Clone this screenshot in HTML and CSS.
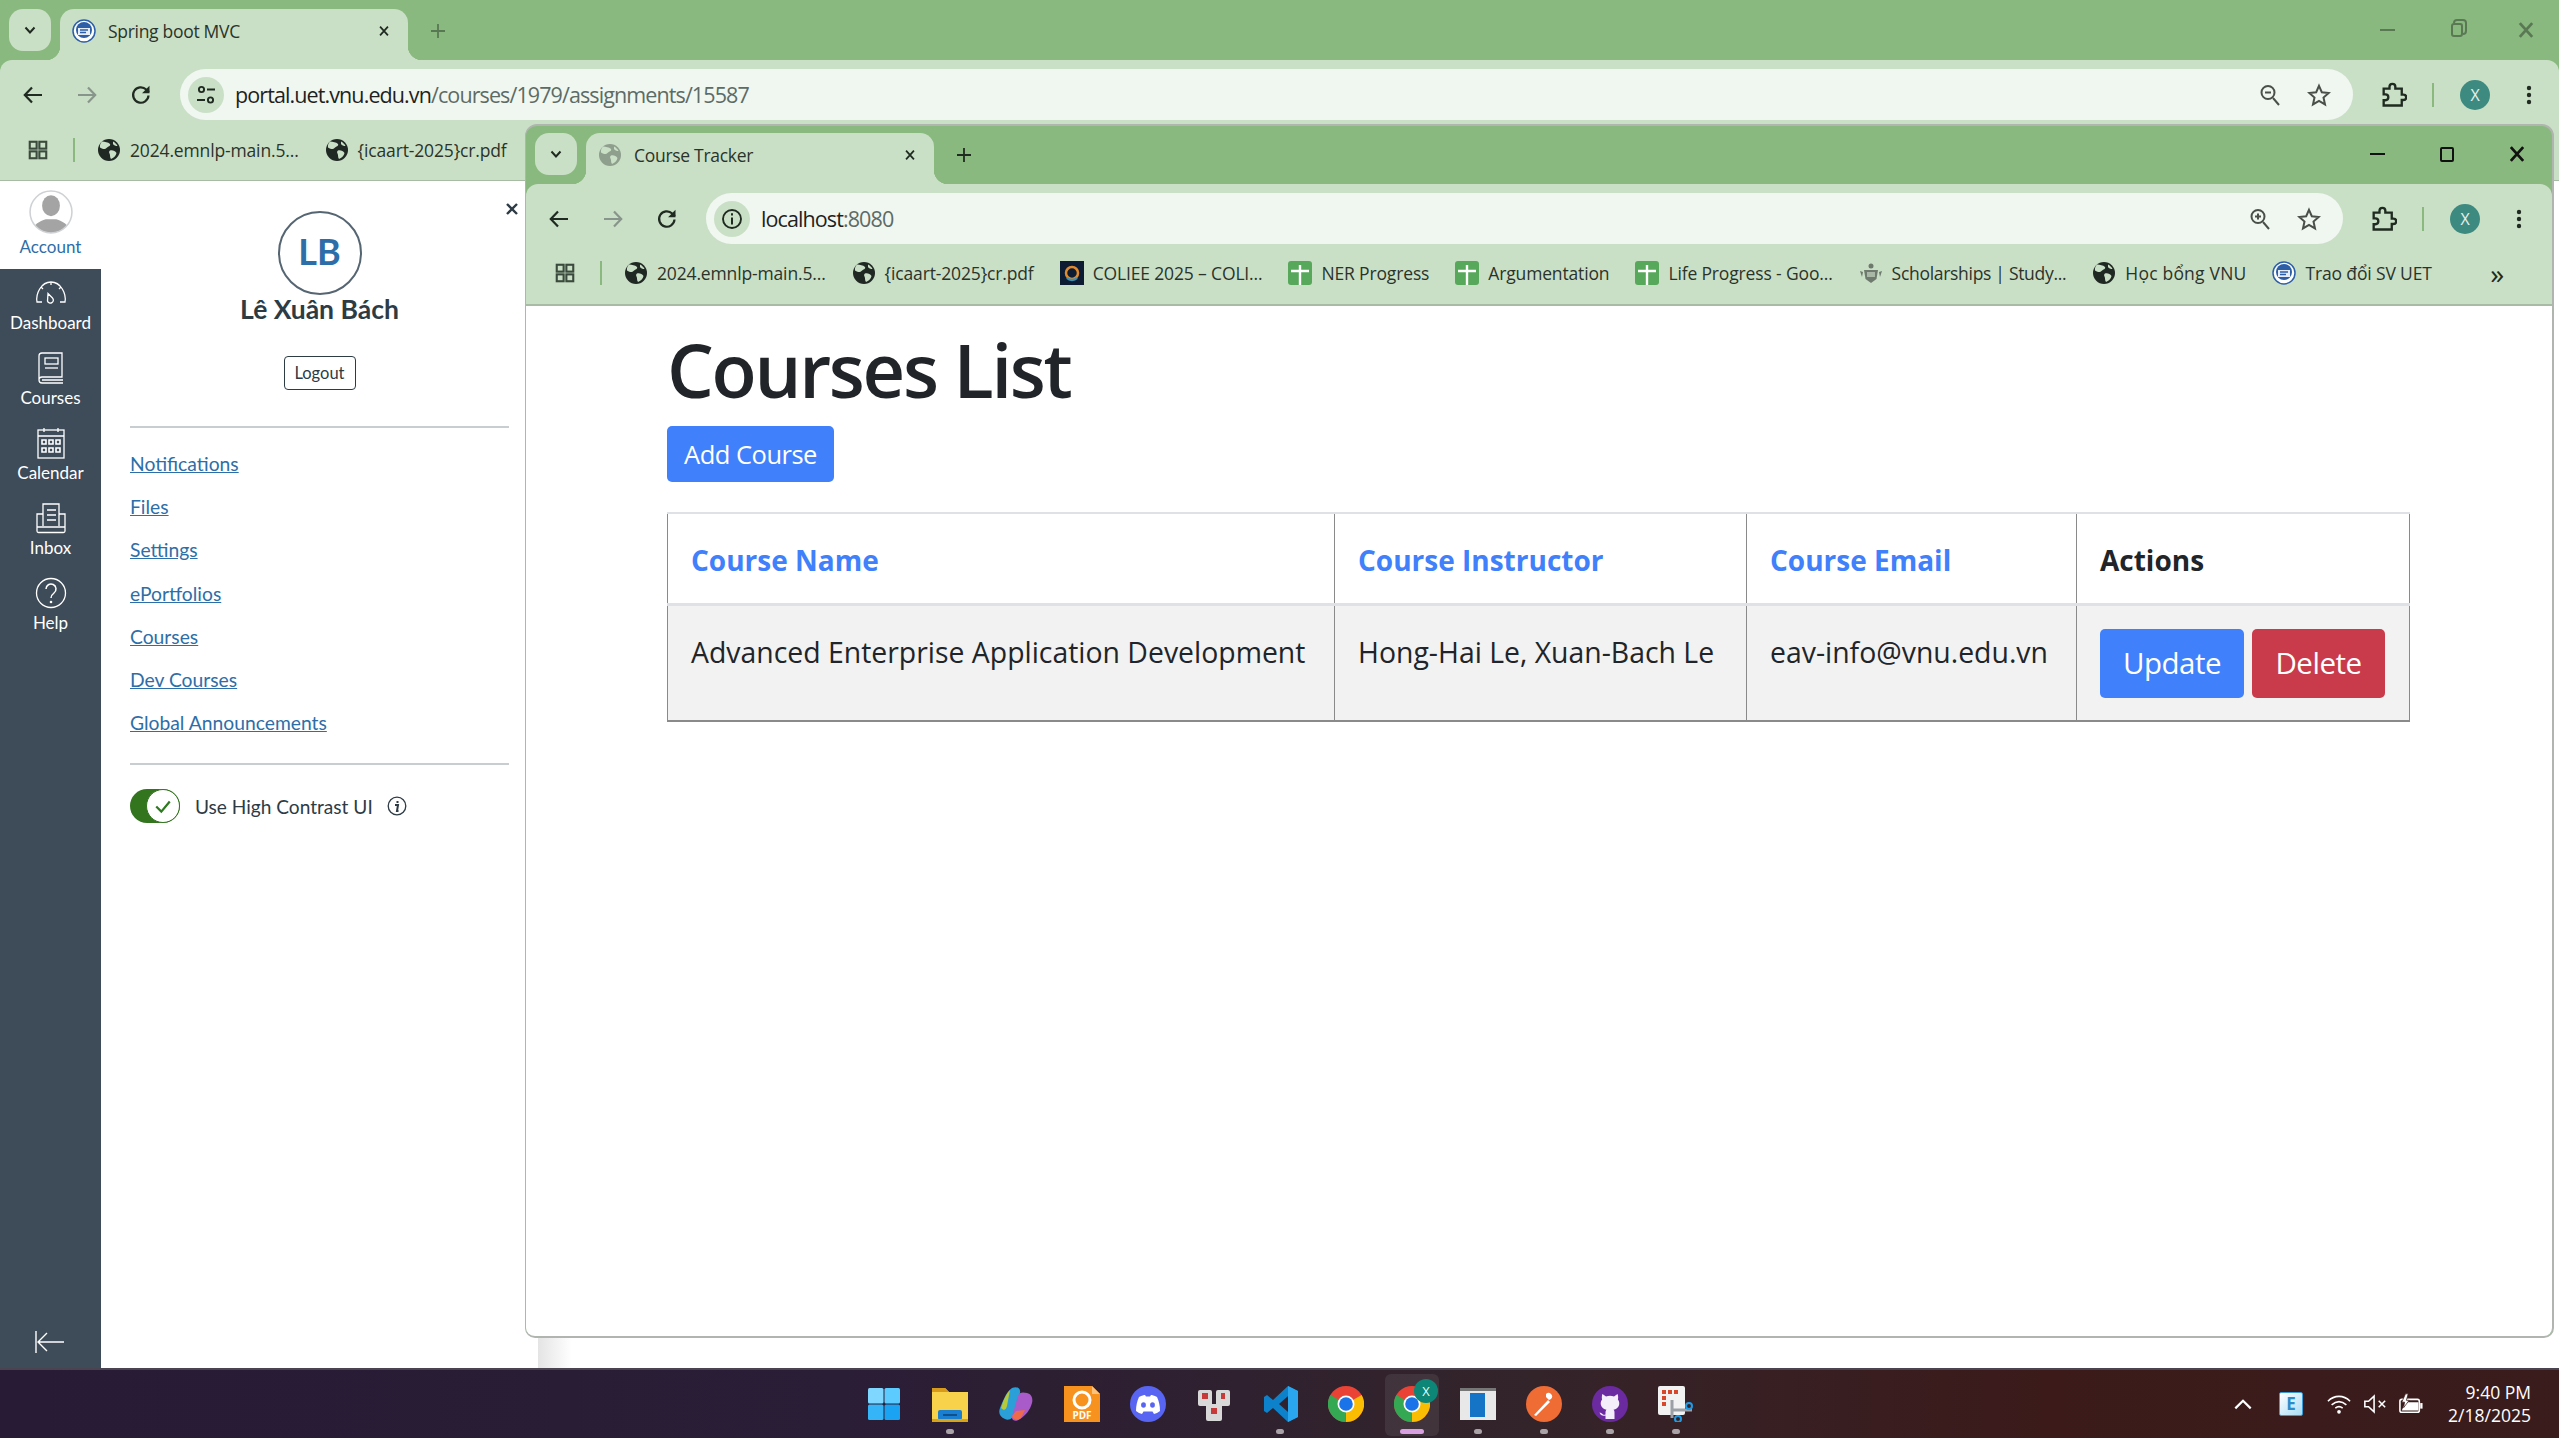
FILE: index.html
```html
<!DOCTYPE html>
<html lang="en">
<head>
<meta charset="utf-8">
<title>Course Tracker</title>
<link rel="stylesheet" href="styles.css">
</head>
<body>
<svg class="defs" width="0" height="0" aria-hidden="true">
  <symbol id="i-chev" viewBox="0 0 16 16"><path d="M3.5 5.5 8 10.5l4.5-5" fill="none" stroke="currentColor" stroke-width="2"/></symbol>
  <symbol id="i-x" viewBox="0 0 16 16"><path d="M3.5 3 12.5 13M12.5 3 3.5 13" fill="none" stroke="currentColor" stroke-width="2"/></symbol>
  <symbol id="i-plus" viewBox="0 0 16 16"><path d="M8 1v14M1 8h14" fill="none" stroke="currentColor" stroke-width="1.8"/></symbol>
  <symbol id="i-back" viewBox="0 0 24 24"><path d="M21 12H4M11 4.5 3.8 12l7.2 7.5" fill="none" stroke="currentColor" stroke-width="2.2"/></symbol>
  <symbol id="i-fwd" viewBox="0 0 24 24"><path d="M3 12h17M13 4.5l7.2 7.5-7.2 7.5" fill="none" stroke="currentColor" stroke-width="2.2"/></symbol>
  <symbol id="i-reload" viewBox="0 0 24 24"><path d="M19.5 12.5a7.7 7.7 0 1 1-2.3-6L20 9" fill="none" stroke="currentColor" stroke-width="2.2"/><path d="M20.5 2.8v7.4h-7.4z" fill="currentColor"/></symbol>
  <symbol id="i-tune" viewBox="0 0 24 24"><g fill="none" stroke="currentColor" stroke-width="1.9"><circle cx="7.5" cy="6.5" r="2.6"/><path d="M13 6.5h8M3 17h8"/><circle cx="16.5" cy="17" r="2.6"/></g></symbol>
  <symbol id="i-info" viewBox="0 0 24 24"><circle cx="12" cy="12" r="9" fill="none" stroke="currentColor" stroke-width="1.9"/><path d="M12 10.5v7M12 6.3v2.2" stroke="currentColor" stroke-width="2"/></symbol>
  <symbol id="i-zoomout" viewBox="0 0 24 24"><g fill="none" stroke="#4a4f4a" stroke-width="2"><circle cx="10" cy="9.5" r="6.5"/><path d="m15 15 6 7M7 9.5h6"/></g></symbol>
  <symbol id="i-zoomin" viewBox="0 0 24 24"><g fill="none" stroke="#4a4f4a" stroke-width="2"><circle cx="10" cy="9.5" r="6.5"/><path d="m15 15 6 7M7 9.5h6M10 6.5v6"/></g></symbol>
  <symbol id="i-star" viewBox="0 0 24 24"><path d="m12 2.8 2.8 6.4 6.9.7-5.2 4.6 1.5 6.9-6-3.6-6 3.6 1.5-6.9-5.2-4.6 6.9-.7z" fill="none" stroke="#4a4f4a" stroke-width="2"/></symbol>
  <symbol id="i-ext" viewBox="0 0 24 24"><path d="M4 6.5h5V5a2.5 2.5 0 0 1 5 0v1.500h5.500v5.200h1.500a2.300 2.300 0 0 1 0 4.600h-1.500V21H4v-4.500h1.500a2.500 2.500 0 0 0 0-5H4z" fill="none" stroke="#1f2a20" stroke-width="2"/></symbol>
  <symbol id="i-menu" viewBox="0 0 24 24"><circle cx="12" cy="5" r="2.200" fill="currentColor"/><circle cx="12" cy="12" r="2.200" fill="currentColor"/><circle cx="12" cy="19" r="2.200" fill="currentColor"/></symbol>
  <symbol id="i-apps" viewBox="0 0 24 24"><g fill="none" stroke="currentColor" stroke-width="2.300"><rect x="3" y="3" width="7.500" height="7.500"/><rect x="13.500" y="3" width="7.500" height="7.500"/><rect x="3" y="13.500" width="7.500" height="7.500"/><rect x="13.500" y="13.500" width="7.500" height="7.500"/></g></symbol>
  <symbol id="i-globe" viewBox="0 0 24 24"><circle cx="12" cy="12" r="11" fill="#202824"/><path d="M5 3.500c3 .5 6 .5 8 2.500 1 2-2 2.500-3.500 4C8 12 6 11 3 9.500 2.500 7 3.500 5 5 3.500zM13 12.500c3-.5 5 .5 6.500 2.500-.5 3-3 5-5.500 6-1.500-2-.5-4-1.500-5.500-.8-1.300-.3-2.300.5-3zM16 3.500c2 1 3.500 2.500 4.500 4.500-2 0-3.500-.5-4.500-2z" fill="#cae0c6"/></symbol>
  <symbol id="i-plusdoc" viewBox="0 0 24 24"><rect width="24" height="24" rx="3" fill="#57a85a"/><path d="M12 4v20M3 10h18" stroke="#fff" stroke-width="2.400"/></symbol>
  <symbol id="i-uet" viewBox="0 0 24 24"><circle cx="12" cy="12" r="11" fill="#fff" stroke="#2d5fa8" stroke-width="1.500"/><circle cx="12" cy="11" r="8" fill="#2d5fa8"/><rect x="6" y="9" width="12" height="7" fill="#e7eef8"/><path d="M8 11h8M8 13.500h6" stroke="#2d5fa8" stroke-width="1.400"/></symbol>
  <symbol id="i-crest" viewBox="0 0 24 24"><g fill="#6d7a6d"><circle cx="12" cy="5" r="2.500"/><path d="M5 9h14l-1.500 9-5.500 4-5.500-4z"/><path d="M1 10l3 1-1 5zM23 10l-3 1 1 5z"/></g><path d="M8 11h8v5H8z" fill="#a9b8a6"/></symbol>
</svg>

<section class="win win-outer">
  <div class="tabstrip">
    <button class="tabdrop"><svg class="ic16"><use href="#i-chev"/></svg></button>
    <div class="tab">
      <svg class="fav"><use href="#i-uet"/></svg>
      <span class="tab-title">Spring boot MVC</span>
      <svg class="ic14 tab-x"><use href="#i-x"/></svg>
    </div>
    <svg class="ic16 newtab dim"><use href="#i-plus"/></svg>
    <div class="controls dim">
      <span class="ctl"><span class="min"></span></span>
      <span class="ctl"><span class="restore"></span></span>
      <span class="ctl"><svg class="ic20"><use href="#i-x"/></svg></span>
    </div>
  </div>
  <div class="toolbar">
    <span class="tbtn"><svg class="ic24"><use href="#i-back"/></svg></span>
    <span class="tbtn off"><svg class="ic24"><use href="#i-fwd"/></svg></span>
    <span class="tbtn"><svg class="ic24"><use href="#i-reload"/></svg></span>
    <div class="omni">
      <span class="chip"><svg class="ic24"><use href="#i-tune"/></svg></span>
      <span class="url">portal.uet.vnu.edu.vn<span class="url-path">/courses/1979/assignments/15587</span></span>
      <span class="omni-end"><svg class="ic24"><use href="#i-zoomout"/></svg><svg class="ic24"><use href="#i-star"/></svg></span>
    </div>
    <div class="tools">
      <svg class="tool-ext"><use href="#i-ext"/></svg>
      <span class="tool-sep"></span>
      <span class="avatar">X</span>
      <svg class="ic24 tool-menu"><use href="#i-menu"/></svg>
    </div>
  </div>
  <div class="bookmarks">
    <svg class="ic24 apps"><use href="#i-apps"/></svg>
    <span class="bm-sep"></span>
    <span class="bm bm-a"><svg class="fav"><use href="#i-globe"/></svg><span>2024.emnlp-main.5...</span></span>
    <span class="bm"><svg class="fav"><use href="#i-globe"/></svg><span>{icaart-2025}cr.pdf</span></span>
  </div>
</section>

<main class="canvas">
  <nav class="rail">
    <a class="rail-account">
      <svg class="rail-avatar" viewBox="0 0 42 42"><defs><clipPath id="avc"><circle cx="21" cy="21" r="20"/></clipPath></defs><circle cx="21" cy="21" r="20" fill="#fff"/><g clip-path="url(#avc)" fill="#a4a4a4"><ellipse cx="21" cy="15" rx="8.500" ry="10"/><path d="M3 42c0-9 7-12 13-14h10c6 2 13 5 13 14z"/></g><circle cx="21" cy="21" r="20" fill="none" stroke="#cfd2d4" stroke-width="1.500"/></svg>
      <span>Account</span>
    </a>
    <a class="rail-item">
      <svg class="rail-ic" viewBox="0 0 32 26"><g fill="none" stroke="#fff" stroke-width="1.300"><path d="M7 22H2C.5 14 6 2 16 2s15.500 12 14 20h-5"/><path d="M13 13.500 17.500 18a3 3 0 1 1-5 3z"/><path d="M16 2v3M6 7l2 2M26 7l-2 2"/></g></svg>
      <span>Dashboard</span>
    </a>
    <a class="rail-item">
      <svg class="rail-ic" viewBox="0 0 32 32"><g fill="none" stroke="#fff" stroke-width="1.300"><path d="M7 1h20v24H7a3 3 0 0 0-3 3V4a3 3 0 0 1 3-3z"/><path d="M4 28a3 3 0 0 0 3 3h21M7 28h21"/><rect x="10" y="6" width="13" height="6"/><path d="M10 16h13"/></g></svg>
      <span>Courses</span>
    </a>
    <a class="rail-item">
      <svg class="rail-ic" viewBox="0 0 32 32"><g fill="none" stroke="#fff" stroke-width="1.300"><rect x="3" y="3" width="26" height="28"/><path d="M3 9h26M9 1v4M23 1v4"/><path d="M7 13h4v4H7zM14 13h4v4h-4zM21 13h4v4h-4zM7 21h4v4H7zM14 21h4v4h-4zM21 21h4v4h-4z" stroke-width="1.600"/></g></svg>
      <span>Calendar</span>
    </a>
    <a class="rail-item">
      <svg class="rail-ic" viewBox="0 0 32 32"><g fill="none" stroke="#fff" stroke-width="1.300"><path d="M8 24V2h16v22"/><path d="M12 8h9M12 13h9M12 18h9"/><path d="M8 12H2v17a1.500 1.500 0 0 0 1.500 1.500h25A1.500 1.500 0 0 0 30 29V12h-6M2 25h28"/></g></svg>
      <span>Inbox</span>
    </a>
    <a class="rail-item">
      <svg class="rail-ic" viewBox="0 0 32 32"><circle cx="16" cy="16" r="14.500" fill="none" stroke="#fff" stroke-width="1.300"/><path d="M11 12a5 5 0 1 1 8 4c-2 1.500-3 2.500-3 5" fill="none" stroke="#fff" stroke-width="1.500"/><circle cx="16" cy="25" r="1.300" fill="#fff"/></svg>
      <span>Help</span>
    </a>
    <svg class="rail-collapse" viewBox="0 0 32 24"><path d="M2 1v22M30 12H5M13 3l-9 9 9 9" fill="none" stroke="#fff" stroke-width="1.400"/></svg>
  </nav>

  <aside class="tray-panel">
    <svg class="panel-x" viewBox="0 0 14 14"><path d="M2 2l10 10M12 2 2 12" stroke="#2d3b45" stroke-width="2.400"/></svg>
    <div class="profile">
      <div class="initials">LB</div>
      <div class="name">Lê Xuân Bách</div>
      <button class="logout">Logout</button>
    </div>
    <ul class="links">
      <li><a href="#">Notifications</a></li>
      <li><a href="#">Files</a></li>
      <li><a href="#">Settings</a></li>
      <li><a href="#">ePortfolios</a></li>
      <li><a href="#">Courses</a></li>
      <li><a href="#">Dev Courses</a></li>
      <li><a href="#">Global Announcements</a></li>
    </ul>
    <div class="contrast">
      <span class="switch"><span class="knob"><svg viewBox="0 0 16 16"><path d="M2 8.500 6.500 13 14 4" fill="none" stroke="#2d7a1f" stroke-width="2"/></svg></span></span>
      <span class="contrast-label">Use High Contrast UI</span>
      <svg class="contrast-info" viewBox="0 0 20 20"><circle cx="10" cy="10" r="8.800" fill="none" stroke="#2d3b45" stroke-width="1.300"/><path d="M8 9h3l-1 6h1.500M10.500 5v2" fill="none" stroke="#2d3b45" stroke-width="2"/></svg>
    </div>
  </aside>
  <div class="panel-shadow"></div>

  <section class="win win-inner">
    <div class="tabstrip">
      <button class="tabdrop"><svg class="ic16"><use href="#i-chev"/></svg></button>
      <div class="tab">
        <svg class="fav fav-grey"><use href="#i-globe"/></svg>
        <span class="tab-title">Course Tracker</span>
        <svg class="ic14 tab-x"><use href="#i-x"/></svg>
      </div>
      <svg class="ic16 newtab"><use href="#i-plus"/></svg>
      <div class="controls">
        <span class="ctl"><span class="min"></span></span>
        <span class="ctl"><span class="max"></span></span>
        <span class="ctl"><svg class="ic20"><use href="#i-x"/></svg></span>
      </div>
    </div>
    <div class="toolbar">
      <span class="tbtn"><svg class="ic24"><use href="#i-back"/></svg></span>
      <span class="tbtn off"><svg class="ic24"><use href="#i-fwd"/></svg></span>
      <span class="tbtn"><svg class="ic24"><use href="#i-reload"/></svg></span>
      <div class="omni">
        <span class="chip"><svg class="ic24"><use href="#i-info"/></svg></span>
        <span class="url">localhost<span class="url-path">:8080</span></span>
        <span class="omni-end"><svg class="ic24"><use href="#i-zoomin"/></svg><svg class="ic24"><use href="#i-star"/></svg></span>
      </div>
      <div class="tools">
        <svg class="tool-ext"><use href="#i-ext"/></svg>
        <span class="tool-sep"></span>
        <span class="avatar">X</span>
        <svg class="ic24 tool-menu"><use href="#i-menu"/></svg>
      </div>
    </div>
    <div class="bookmarks">
      <svg class="ic24 apps"><use href="#i-apps"/></svg>
      <span class="bm-sep"></span>
      <span class="bm bm-a"><svg class="fav"><use href="#i-globe"/></svg><span>2024.emnlp-main.5...</span></span>
      <span class="bm"><svg class="fav"><use href="#i-globe"/></svg><span>{icaart-2025}cr.pdf</span></span>
      <span class="bm"><svg class="fav" viewBox="0 0 24 24"><rect width="24" height="24" fill="#0d1b33"/><circle cx="12" cy="12" r="6" fill="none" stroke="#e08a2e" stroke-width="2.500"/><path d="M7 17a7 7 0 0 0 10 0" fill="none" stroke="#3d8fb5" stroke-width="2.500"/></svg><span>COLIEE 2025 – COLI...</span></span>
      <span class="bm"><svg class="fav"><use href="#i-plusdoc"/></svg><span>NER Progress</span></span>
      <span class="bm"><svg class="fav"><use href="#i-plusdoc"/></svg><span>Argumentation</span></span>
      <span class="bm"><svg class="fav"><use href="#i-plusdoc"/></svg><span>Life Progress - Goo...</span></span>
      <span class="bm"><svg class="fav"><use href="#i-crest"/></svg><span class="bm-tight">Scholarships | Study...</span></span>
      <span class="bm"><svg class="fav"><use href="#i-globe"/></svg><span class="bm-wide">Học bổng VNU</span></span>
      <span class="bm"><svg class="fav"><use href="#i-uet"/></svg><span>Trao đổi SV UET</span></span>
      <span class="bm-more">»</span>
    </div>
    <div class="page">
      <h1 class="page-title">Courses List</h1>
      <a class="btn btn-blue btn-add">Add Course</a>
      <table class="courses">
        <colgroup><col class="c1"><col class="c2"><col class="c3"><col class="c4"></colgroup>
        <thead>
          <tr>
            <th><a>Course Name</a></th>
            <th><a>Course Instructor</a></th>
            <th><a>Course Email</a></th>
            <th>Actions</th>
          </tr>
        </thead>
        <tbody>
          <tr>
            <td>Advanced Enterprise Application Development</td>
            <td>Hong-Hai Le, Xuan-Bach Le</td>
            <td>eav-info@vnu.edu.vn</td>
            <td class="actions"><a class="btn btn-blue btn-row">Update</a><a class="btn btn-red btn-row">Delete</a></td>
          </tr>
        </tbody>
      </table>
    </div>
  </section>
</main>

<footer class="taskbar">
  <div></div>
  <div class="dock">
    <span class="app"><svg viewBox="0 0 36 36"><g fill="#4cc2ff"><rect x="2" y="2" width="15.500" height="15.500" rx="1.500" fill="#7fd6ff"/><rect x="18.500" y="2" width="15.500" height="15.500" rx="1.500" fill="#5ccbff"/><rect x="2" y="18.500" width="15.500" height="15.500" rx="1.500" fill="#35b5f8"/><rect x="18.500" y="18.500" width="15.500" height="15.500" rx="1.500" fill="#1aa3f2"/></g></svg></span>
    <span class="app run"><svg viewBox="0 0 36 36"><path d="M0 2h13l4 4h19v30H0z" fill="#f8d24a"/><path d="M0 2h13l4 4H0z" fill="#d89a1b"/><rect x="6" y="24" width="24" height="10" rx="2" fill="#1a7fd0"/><rect x="11" y="28" width="14" height="2" fill="#0f4f8a"/><rect y="33" width="36" height="3" fill="#d9a318"/></svg></span>
    <span class="app"><svg viewBox="0 0 36 36"><path d="M14 2c5-2 9 0 8 5l-5 20c-1 5-6 8-10 6-5-2-7-6-5-11 3-7 6-16 12-20z" fill="#2b9fd8"/><path d="M3 22c2-7 5-14 9-18l-3 16c-1 4-3 5-6 2z" fill="#b8c93a"/><path d="M22 33c-4 3-9 2-8-3l6-20c1-4 5-4 9-3 5 1 6 6 5 10-2 7-6 12-12 16z" fill="#a85bc9"/><path d="M14 30c1 4 6 5 9 2l4-8-9 1z" fill="#ef6a4b"/></svg></span>
    <span class="app"><svg viewBox="0 0 36 36"><path d="M0 0h28l8 8v28H0z" fill="#f7921e"/><path d="M28 0v8h8z" fill="#fbc27e"/><circle cx="18" cy="14" r="8" fill="none" stroke="#fff" stroke-width="3"/><text x="18" y="33" text-anchor="middle" class="pdf-text">PDF</text></svg></span>
    <span class="app"><svg viewBox="0 0 36 36"><circle cx="18" cy="18" r="18" fill="#5865f2"/><path d="M9 11c3-1.500 5-2 6-2l1 1.500h4L21 9c1 0 3 .5 6 2 2 4 3 9 3 14-2 1.500-4 2.500-6 3l-1.500-2.500H13.500L12 28c-2-.5-4-1.500-6-3 0-5 1-10 3-14z" fill="#fff"/><ellipse cx="13.500" cy="19" rx="2.400" ry="2.800" fill="#5865f2"/><ellipse cx="22.500" cy="19" rx="2.400" ry="2.800" fill="#5865f2"/></svg></span>
    <span class="app"><svg viewBox="0 0 36 36"><g fill="#d8d8d8"><rect x="2" y="4" width="14" height="16" rx="2"/><rect x="20" y="4" width="14" height="16" rx="2"/><rect x="10" y="18" width="16" height="17" rx="2"/></g><g fill="#c83a3a"><rect x="6" y="7" width="6" height="6"/><rect x="25" y="7" width="4" height="6"/><rect x="15" y="22" width="6" height="6"/></g></svg></span>
    <span class="app run"><svg viewBox="0 0 36 36"><path d="M26 0 36 5v26l-10 5-15-14-6 5-3-2V11l3-2 6 5zm0 10-9 8 9 8z" fill="#0d82cb"/><path d="M26 0 36 5v26l-10 5z" fill="#2aa6ef"/></svg></span>
    <span class="app"><svg viewBox="0 0 36 36"><use href="#chrome-mark"/></svg></span>
    <span class="app active"><span class="active-bg"></span><svg viewBox="0 0 36 36"><use href="#chrome-mark"/></svg><span class="badge">X</span></span>
    <span class="app run"><svg viewBox="0 0 36 36"><rect width="36" height="32" y="2" fill="#e8e8e8"/><rect width="36" height="3" y="2" fill="#777"/><rect x="10" y="7" width="15" height="24" fill="#1674c7"/></svg></span>
    <span class="app run"><svg viewBox="0 0 36 36"><circle cx="18" cy="18" r="18" fill="#ef6c35"/><path d="M8 29 22 14l2 2L10 30zM20 8a3.500 3.500 0 1 1 5 5l-2 1-3-3z" fill="#fff"/></svg></span>
    <span class="app run"><svg viewBox="0 0 36 36"><circle cx="18" cy="18" r="18" fill="#6b2aa0"/><path d="M10.500 8l3.500 2.500a13 13 0 0 1 8 0L25.500 8c.8 2.200.8 4 .4 5.400 1.300 1.500 1.600 3.600 1.200 5.600-.6 2.800-3.200 4.300-5.600 4.700.8.700 1 1.700 1 3V33h-9v-3.500c-3 .8-5-.2-6-3 1.500.2 2.500 1 3.500 2 .8.400 1.500.4 2.500.1v-2c0-1.300.3-2.200 1-2.900-2.400-.4-5-1.900-5.600-4.700-.4-2-.1-4.100 1.200-5.600-.4-1.400-.4-3.200.3-5.400z" fill="#f4eefb"/></svg></span>
    <span class="app run"><svg viewBox="0 0 36 36"><rect x="0" y="0" width="27" height="29" rx="2" fill="#f2f2f2"/><path d="M4 4h4v4H4zM10 4h4v4h-4zM16 4h4v4h-4zM4 10h4v4H4zM4 16h4v4H4z" fill="#d9472b"/><path d="M14 14v18M14 24h20" stroke="#9aa0a6" stroke-width="3"/><circle cx="31" cy="20" r="3" fill="none" stroke="#1f9be6" stroke-width="2"/><circle cx="20" cy="33" r="3" fill="none" stroke="#1f9be6" stroke-width="2"/></svg></span>
  </div>
  <div class="sys">
    <span class="sys-cell"><svg class="sys-ic" viewBox="0 0 20 20"><path d="M3 14l7-7 7 7" fill="none" stroke="#fff" stroke-width="2"/></svg></span>
    <span class="sys-cell sys-wide"><span class="e-box">E</span></span>
    <span class="sys-cell"><svg class="sys-ic" viewBox="0 0 26 22"><g fill="none" stroke="#fff" stroke-width="1.700"><path d="M1 8c7-7 17-7 24 0M5 12c5-4.500 11-4.500 16 0M9 15.500c2.500-2 5.500-2 8 0"/></g><circle cx="13" cy="19.500" r="2" fill="#fff"/></svg></span>
    <span class="sys-cell"><svg class="sys-ic" viewBox="0 0 26 22"><g fill="none" stroke="#fff" stroke-width="1.700"><path d="M2 8h4l6-5.500v17L6 14H2zM17 7.500l7 7M24 7.500l-7 7"/></g></svg></span>
    <span class="sys-cell"><svg class="sys-ic sys-bat" viewBox="0 0 26 22"><g fill="none" stroke="#fff" stroke-width="1.700"><rect x="1" y="6" width="21" height="14" rx="2"/></g><rect x="23" y="10" width="2.500" height="6" fill="#fff"/><path d="M3 18l4-9h14v9z" fill="#fff"/><path d="M7 0 3 9h3l-1 6 6-8H8l2-7z" fill="#fff" stroke="#3a1c1c" stroke-width=".8"/></svg></span>
    <div class="clock"><span>9:40 PM</span><span>2/18/2025</span></div>
  </div>
</footer>

<svg class="defs" width="0" height="0" aria-hidden="true">
  <symbol id="chrome-mark" viewBox="0 0 36 36">
    <circle cx="18" cy="18" r="18" fill="#ea4335"/>
    <path d="M18 36A18 18 0 0 1 2.400 9L18 18l-.5 18z" fill="#34a853"/>
    <path d="M18 36 18 18l15.600-9A18 18 0 0 1 18 36z" fill="#fbbc04"/>
    <circle cx="18" cy="18" r="8.500" fill="#fff"/>
    <circle cx="18" cy="18" r="6.800" fill="#1a73e8"/>
  </symbol>
</svg>
</body>
</html>
```

FILE: styles.css
```css
* { box-sizing: border-box; }
html, body { margin: 0; padding: 0; }
body {
  width: 2559px;
  height: 1438px;
  display: flex;
  flex-direction: column;
  overflow: hidden;
  position: relative;
  background: #fff;
  font-family: "Open Sans", "Noto Sans", sans-serif;
  color: #1f1f1f;
}
.defs { position: absolute; }
svg { display: block; flex: none; }
button { font: inherit; }
a { text-decoration: none; }

.ic14 { width: 14px; height: 14px; }
.ic16 { width: 16px; height: 16px; }
.ic20 { width: 22px; height: 24px; }
.ic24 { width: 24px; height: 24px; }
.fav { width: 24px; height: 24px; }
.fav-grey { opacity: .35; }

/* browser chrome */
.win { background: #89b97f; }
.win-outer { height: 181px; flex: none; border-bottom: 1px solid #a8bba5; background: #89b97f; }
.win-inner {
  position: absolute;
  left: 525px;
  top: -57px;
  width: 2029px;
  height: 1214px;
  border: 2px solid #b0b6af;
  border-left-width: 1px;
  border-radius: 12px 12px 10px 10px;
  overflow: hidden;
  display: flex;
  flex-direction: column;
  background: #89b97f;
}
.tabstrip {
  height: 60px;
  display: flex;
  align-items: flex-start;
  padding: 9px 0 0 9px;
  position: relative;
}
.win-inner .tabstrip { height: 58px; padding-top: 7px; }
.tabdrop {
  width: 42px;
  height: 42px;
  border: 0;
  padding: 0;
  border-radius: 14px;
  background: #cae0c6;
  color: #1f2a20;
  display: flex;
  align-items: center;
  justify-content: center;
}
.tab {
  width: 348px;
  height: 51px;
  margin-left: 9px;
  background: #cae0c6;
  border-radius: 14px 14px 0 0;
  display: flex;
  align-items: center;
  padding: 0 17px 8px 12px;
  position: relative;
}
.tab::before, .tab::after {
  content: "";
  position: absolute;
  bottom: 0;
  width: 14px;
  height: 14px;
}
.tab::before { left: -14px; background: radial-gradient(circle at 0 0, transparent 14px, #cae0c6 14.5px); }
.tab::after { right: -14px; background: radial-gradient(circle at 100% 0, transparent 14px, #cae0c6 14.5px); }
.tab-title { flex: 1; margin-left: 12px; font-size: 17.5px; letter-spacing: -.3px; color: #2a332b; white-space: nowrap; }
.tab-x { color: #1f2a20; }
.newtab { margin: 14px 0 0 22px; color: #1f2a20; }
.dim { opacity: .38; }
.dim.newtab { opacity: .45; }
.controls {
  margin-left: auto;
  display: flex;
  align-items: center;
  height: 42px;
  color: #111;
}
.win-outer .controls { margin-right: -1px; }
.win-inner .controls { margin-right: 0; }
.ctl { width: 69px; display: flex; align-items: center; justify-content: center; }
.win-inner .ctl { width: 70px; }
.min { width: 15px; height: 2px; background: currentColor; }
.max { width: 14px; height: 15px; border: 2px solid currentColor; border-radius: 2px; }
.restore {
  width: 12px;
  height: 14px;
  border: 2px solid currentColor;
  border-radius: 3px;
  box-shadow: 3px -3px 0 -1px #89b97f, 3px -3px 0 1px currentColor;
}

.toolbar {
  height: 60px;
  background: #cae0c6;
  border-radius: 12px 12px 0 0;
  display: flex;
  align-items: flex-end;
  padding: 0 18px 0 6px;
  flex: none;
}
.win-inner .toolbar { padding-right: 21px; }
.tbtn {
  width: 54px;
  height: 51px;
  display: flex;
  align-items: center;
  justify-content: center;
  color: #1f2a20;
}
.tbtn.off { color: #87958a; }
.omni {
  flex: 1;
  height: 51px;
  margin-left: 12px;
  background: #f0f7f0;
  border-radius: 26px;
  display: flex;
  align-items: center;
  padding: 0 22px 0 8px;
}
.chip {
  width: 36px;
  height: 36px;
  border-radius: 50%;
  background: #cae0c6;
  display: flex;
  align-items: center;
  justify-content: center;
  color: #1f2a20;
}
.url { margin-left: 11px; font-size: 21.500px; letter-spacing: -.9px; color: #1f1f1f; white-space: nowrap; }
.url-path { color: #5c6b66; }
.omni-end { margin-left: auto; display: flex; gap: 25px; }
.tools { display: flex; align-items: center; height: 51px; }
.tool-ext { margin-left: 26px; width: 28px; height: 30px; }
.tool-sep { width: 2px; height: 24px; background: #89b97f; margin-left: 25px; }
.avatar {
  width: 30px;
  height: 30px;
  margin-left: 26px;
  border-radius: 50%;
  background: #3d8a80;
  color: #e4f2ee;
  font-size: 16px;
  display: flex;
  align-items: center;
  justify-content: center;
}
.tool-menu { margin: 0 0 0 27px; color: #1f2a20; }

.bookmarks {
  height: 62px;
  background: #cae0c6;
  border-bottom: 2px solid #a8bba5;
  display: flex;
  align-items: center;
  padding: 0 0 2px 28px;
  flex: none;
  font-size: 17.500px;
  letter-spacing: -.15px;
  color: #2a332b;
}
.win-outer .bookmarks { height: 60px; border-bottom: 0; padding: 0 0 0 27px; }
.apps { width: 22px; height: 22px; color: #3a4a3c; }
.bm-sep { width: 2px; height: 24px; background: #89b97f; margin: 0 22px 0 24px; }
.bm { display: flex; align-items: center; gap: 9px; margin-right: 26px; white-space: nowrap; }
.bm-tight { letter-spacing: -.3px; }
.bm-wide { letter-spacing: .2px; }
.bm-more { position: absolute; right: 48px; font-size: 28px; color: #1f2a20; }

/* page area */
.canvas { flex: 1; display: flex; position: relative; min-height: 0; }
.rail {
  width: 101px;
  background: #3e4b58;
  display: flex;
  flex-direction: column;
  align-items: center;
  position: relative;
  font-family: Lato, sans-serif;
  font-size: 17px;
  color: #fff;
  text-align: center;
}
.rail-account {
  width: 101px;
  height: 88px;
  background: #fff;
  color: #2d6ea8;
  display: flex;
  flex-direction: column;
  align-items: center;
  padding-top: 9px;
  gap: 2px;
}
.rail-avatar { width: 44px; height: 44px; }
.rail-item {
  width: 101px;
  height: 75px;
  display: flex;
  flex-direction: column;
  align-items: center;
  justify-content: flex-end;
  padding-bottom: 11px;
  gap: 3px;
}
.rail-ic { width: 32px; height: 32px; }
.rail-collapse { position: absolute; left: 34px; bottom: 14px; width: 32px; height: 24px; }

.tray-panel {
  width: 437px;
  padding: 0 29px;
  background: #fff;
  position: relative;
  font-family: Lato, sans-serif;
  color: #2d3b45;
}
.panel-x { position: absolute; right: 19px; top: 21px; width: 14px; height: 14px; }
.profile {
  display: flex;
  flex-direction: column;
  align-items: center;
  padding-top: 30px;
  height: 247px;
  border-bottom: 2px solid #c7cdd1;
}
.initials {
  width: 84px;
  height: 84px;
  border: 2px solid #556572;
  border-radius: 50%;
  display: flex;
  align-items: center;
  justify-content: center;
  padding-bottom: 4px;
  font-size: 36px;
  font-weight: 700;
  color: #2d6ea8;
}
.name { margin-top: -1px; font-size: 26.500px; line-height: 30px; font-weight: 700; color: #2d3b45; }
.logout {
  margin-top: 32px;
  width: 72px;
  height: 34px;
  padding: 0;
  background: #fff;
  border: 1px solid #2d3b45;
  border-radius: 4px;
  font-family: Lato, sans-serif;
  font-size: 16.500px;
  color: #2d3b45;
}
.links {
  list-style: none;
  margin: 0;
  padding: 14px 0 19px;
  border-bottom: 2px solid #c7cdd1;
  font-size: 19.300px;
}
.links li { height: 43.200px; display: flex; align-items: center; }
.links a { color: #2d6ea8; text-decoration: underline; }
.contrast { display: flex; align-items: center; margin-top: 24px; }
.switch {
  width: 50px;
  height: 34px;
  border-radius: 17px;
  background: #33751f;
  position: relative;
}
.knob {
  position: absolute;
  right: 0;
  top: 0;
  width: 34px;
  height: 34px;
  border-radius: 50%;
  background: #fff;
  border: 1px solid #33751f;
  display: flex;
  align-items: center;
  justify-content: center;
}
.knob svg { width: 18px; height: 18px; }
.contrast-label { margin-left: 15px; font-size: 19.100px; }
.contrast-info { margin-left: 14px; width: 20px; height: 20px; }
.panel-shadow {
  position: absolute;
  left: 538px;
  bottom: 0;
  width: 34px;
  height: 30px;
  background: linear-gradient(90deg, #e4e4e4, #fff);
}

/* inner page */
.page {
  flex: 1;
  background: #fff;
  padding: 16px 0 0 141px;
  font-family: "Open Sans", "Noto Sans", sans-serif;
  color: #212529;
}
.page-title {
  margin: 0 0 8px;
  font-size: 74px;
  line-height: 96px;
  font-weight: 600;
  letter-spacing: -2.300px;
}
.btn {
  display: inline-flex;
  align-items: center;
  justify-content: center;
  border-radius: 5px;
  color: #fff;
}
.btn-blue { background: #4180fb; }
.btn-red { background: #c93b4a; }
.btn-add {
  width: 167px;
  height: 56px;
  font-size: 25.500px;
  letter-spacing: -.5px;
}
.btn-row {
  height: 69px;
  font-size: 29.500px;
  letter-spacing: -.5px;
}
.btn-row.btn-blue { width: 144px; margin-right: 8px; }
.btn-row.btn-red { width: 133px; }
.courses {
  display: table;
  margin-top: 30px;
  width: 1742px;
  table-layout: fixed;
  border-collapse: collapse;
  font-size: 28.400px;
}
.c1 { width: 667px; }
.c2 { width: 412px; }
.c3 { width: 330px; }
.c4 { width: 333px; }
.courses th, .courses td {
  border: 1px solid #8a8a8a;
  padding: 0 0 0 23px;
  text-align: left;
  vertical-align: top;
  white-space: nowrap;
}
.courses th {
  height: 91px;
  padding-top: 27px;
  font-weight: 700;
  font-size: 28px;
  line-height: 38px;
  border-top: 2px solid #dee2e6;
  border-bottom: 3px solid #dee2e6;
  color: #212529;
}
.courses th a { color: #4180fb; }
.courses td {
  height: 117px;
  padding-top: 27px;
  line-height: 38px;
  background: #f2f2f2;
  border-bottom: 2px solid #8a8a8a;
}
.courses td.actions { padding-top: 23px; line-height: 1; }

/* taskbar */
.taskbar {
  height: 70px;
  flex: none;
  display: grid;
  grid-template-columns: 1fr auto 1fr;
  border-top: 2px solid #4a4350;
  background: linear-gradient(90deg, #271b35 0%, #2a1d36 33%, #33242a 60%, #3c1a1a 80%, #3a1c1c 100%);
  position: relative;
  z-index: 2;
}
.dock { display: flex; margin-left: 1px; }
.app {
  width: 66px;
  display: flex;
  align-items: center;
  justify-content: center;
  position: relative;
  padding-bottom: 1px;
}
.app > svg { width: 36px; height: 36px; position: relative; }
.app.run::after {
  content: "";
  position: absolute;
  bottom: 4px;
  left: 29px;
  width: 8px;
  height: 5px;
  border-radius: 3px;
  background: #a9a3a8;
}
.app.active::after {
  content: "";
  position: absolute;
  bottom: 4px;
  left: 21px;
  width: 24px;
  height: 5px;
  border-radius: 3px;
  background: #d8a0e0;
}
.active-bg {
  position: absolute;
  left: 6px;
  right: 6px;
  top: 4px;
  bottom: 2px;
  border-radius: 6px;
  background: rgba(255,255,255,.08);
}
.badge {
  position: absolute;
  left: 35px;
  top: 9px;
  width: 24px;
  height: 24px;
  border-radius: 50%;
  background: #0d8577;
  color: #dff;
  font-size: 13px;
  display: flex;
  align-items: center;
  justify-content: center;
}
.pdf-text { font-family: "Open Sans", sans-serif; font-size: 10px; font-weight: 700; fill: #fff; }
.sys {
  display: flex;
  align-items: center;
  justify-content: flex-end;
  padding-right: 28px;
  color: #fff;
}
.sys-cell { width: 36px; display: flex; justify-content: center; }
.sys-wide { width: 60px; }
.sys-ic { width: 24px; height: 22px; }
.e-box {
  width: 24px;
  height: 24px;
  background: linear-gradient(135deg, #ffffff, #a8dcf4);
  border: 1px solid #3a9bd6;
  border-radius: 2px;
  color: #2b8cc8;
  font-weight: 700;
  font-size: 17px;
  line-height: 22px;
  text-align: center;
}
.clock {
  width: 102px;
  display: flex;
  flex-direction: column;
  align-items: flex-end;
  font-size: 17.500px;
  line-height: 23px;
  white-space: nowrap;
}
```
